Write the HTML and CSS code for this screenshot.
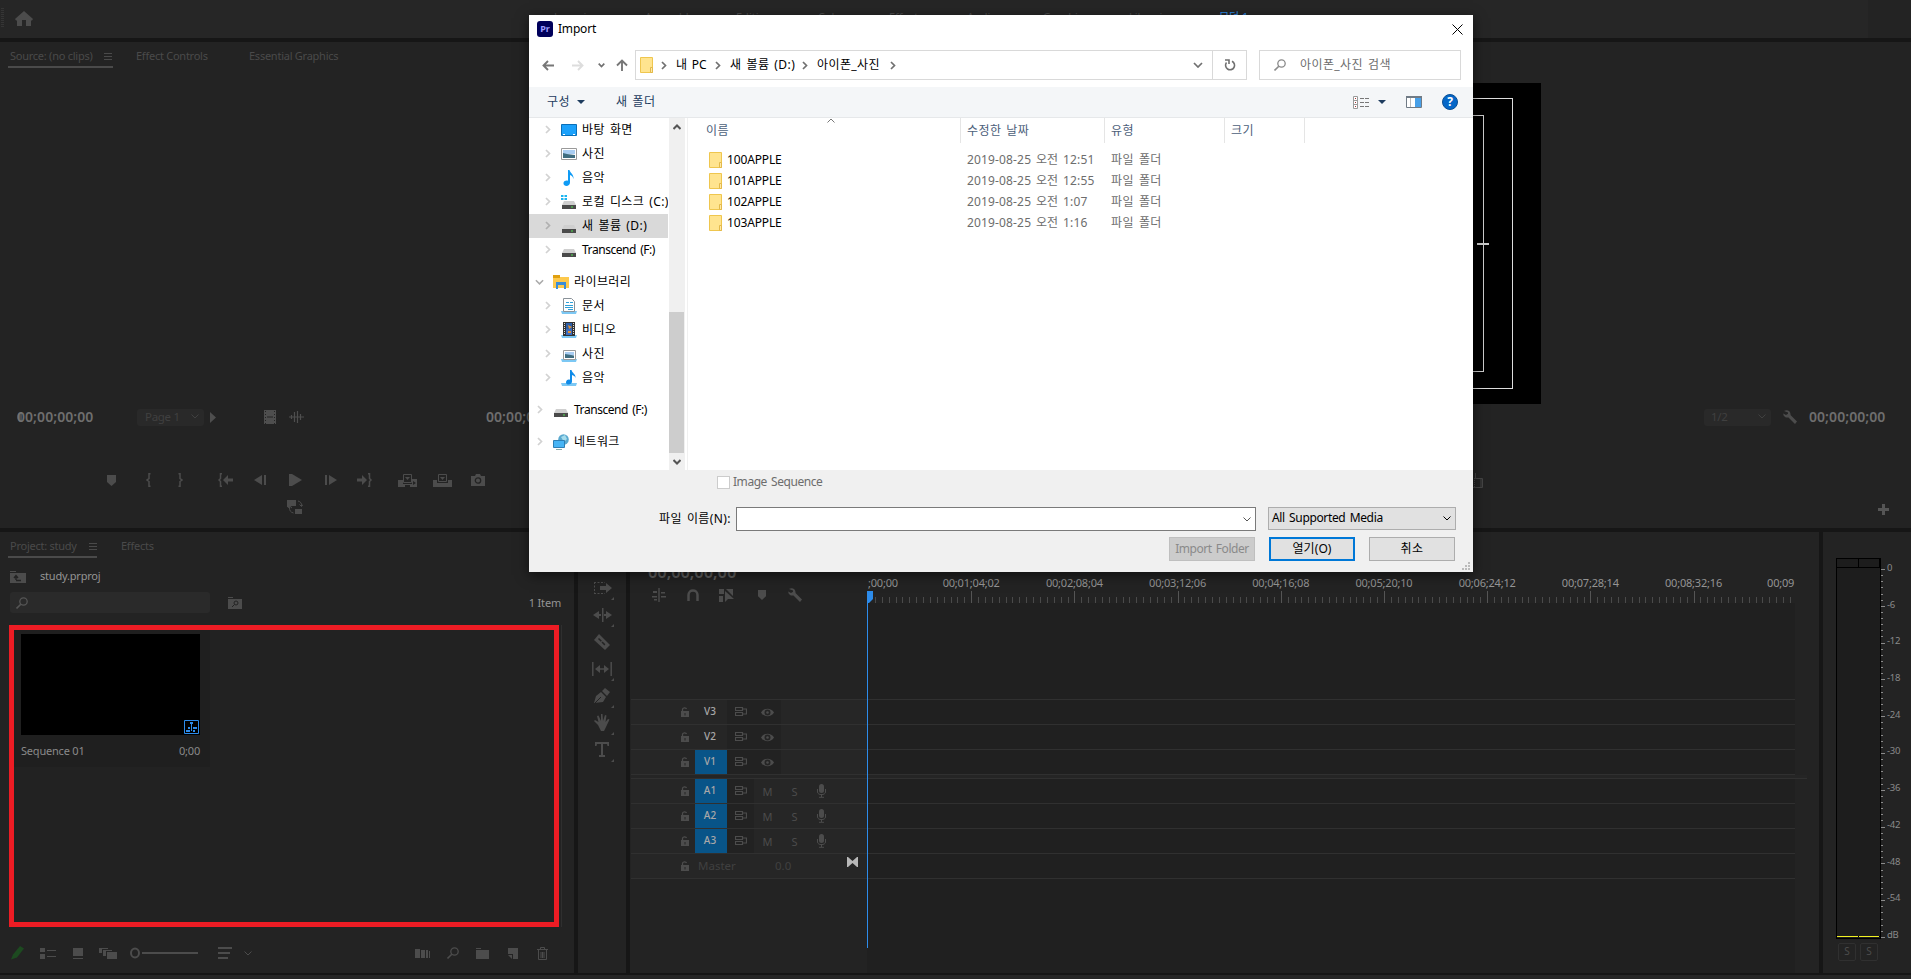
FILE: index.html
```html
<!DOCTYPE html>
<html lang="ko">
<head>
    <meta charset="UTF-8">
    <title>study.prproj</title>
    <link rel="stylesheet" href="styles.css">
</head>
<body>
    <!-- shared icons -->
    <svg class="defs">
        <symbol id="folder" viewBox="0 0 13 16"><path d="M.5.5h12v15H.5z" fill="#ffe48f" stroke="#efc64e"/><path d="M10.5 10.5h2v5h-2z" fill="#ffe9a6" stroke="#e3b94a"/></symbol>
        <symbol id="arrow" viewBox="0 0 6 9"><path d="M1 1l3.5 3.5L1 8" fill="none" stroke="currentColor" stroke-width="1.7"/></symbol>
        <symbol id="down" viewBox="0 0 10 6"><path d="M1 1l4 4 4-4" fill="none" stroke="currentColor" stroke-width="1.7"/></symbol>
        <symbol id="thin-down" viewBox="0 0 8 5"><path d="M.5.5L4 4 7.500.5" fill="none" stroke="currentColor"/></symbol>
        <symbol id="drive" viewBox="0 0 16 16"><path d="M3 7h10l2 4H1z" fill="#cfcfcf"/><path d="M1 11h14v4H1z" fill="#4a4a4a"/><path d="M10 12.500h2v1h-2z" fill="#4ee04e"/></symbol>
        <symbol id="picture" viewBox="0 0 16 16"><path d="M.5 2.500h15v11H.5z" fill="#fff" stroke="#9a9a9a"/><path d="M2 4h12v4H2z" fill="#a9cdf2"/><path d="M2 7l4 1 8 1v3H2z" fill="#3f6d80"/></symbol>
        <symbol id="lib-picture" viewBox="0 0 16 16"><path d="M0 13h16l-1 3H1z" fill="#7cc8f4"/><path d="M2.500 4.500h12v9h-12z" fill="#fff" stroke="#9a9a9a"/><path d="M4 6h9v3H4z" fill="#a9cdf2"/><path d="M4 8l9 1.500V12H4z" fill="#3f6d80"/></symbol>
        <symbol id="note" viewBox="0 0 16 16"><path d="M7 0h1.500c.5 3 4.500 4 4 9-.5-2.500-2-3.500-3.500-4v7.500C9 17 2 17 2.500 12.800 3 10.500 5.500 10 7 10.700z" fill="#0f9bf5"/></symbol>
        <symbol id="lib-note" viewBox="0 0 16 16"><path d="M0 13h16l-1 3H1z" fill="#7cc8f4"/><path d="M9 0h1.500c.5 3 4.500 4 4 8-.5-2-2-2.500-3.500-3v6.500c0 4-6.500 4-6 .5C5.500 9.500 7.500 9 9 9.700z" fill="#0f8be8"/></symbol>
        <symbol id="menu" viewBox="0 0 8 7"><path d="M0 .5h8M0 3.500h8M0 6.500h8" stroke="currentColor"/></symbol>
        <symbol id="marker" viewBox="0 0 9 11"><path d="M0 0h9v7l-4.500 4L0 7z" fill="currentColor"/></symbol>
        <symbol id="wrench" viewBox="0 0 14 14"><path d="M1 1c3-2 7 0 6.500 4L14 11.500 12 14 5.500 7.500C2.500 8 0 6 .3 3.500L3 5l2-1.200V2.500z" fill="currentColor"/></symbol>
        <symbol id="search" viewBox="0 0 12 12"><circle cx="7.500" cy="4.500" r="3.700" fill="none" stroke="currentColor" stroke-width="1.300"/><path d="M4.800 7.200L.5 11.500" stroke="currentColor" stroke-width="1.600"/></symbol>
        <symbol id="lock" viewBox="0 0 8 10"><path d="M0 4h8v6H0z" fill="currentColor"/><path d="M1.500 4V2.500C1.500.5 5 .3 5.500 2" fill="none" stroke="currentColor" stroke-width="1.300"/><path d="M3.500 6h1v2.500h-1z" fill="#252525"/></symbol>
        <symbol id="sync" viewBox="0 0 12 10"><path d="M.5.5h7v3h-7zM.5 5.500h7v3h-7zM8 2h3.500v5H8" fill="none" stroke="currentColor" stroke-width="1.200"/></symbol>
        <symbol id="eye" viewBox="0 0 13 9"><path d="M0 4.500C3-.5 10-.5 13 4.500 10 9.500 3 9.500 0 4.500z" fill="currentColor"/><circle cx="6.500" cy="4.500" r="3" fill="#242424"/><circle cx="6.500" cy="4.500" r="1.300" fill="currentColor"/></symbol>
        <symbol id="mic" viewBox="0 0 9 14"><rect x="2" width="5" height="9" rx="2.500" fill="currentColor"/><path d="M.5 5v3c0 3.500 8 3.500 8 0V5M4.500 10v3M2 13.300h5" fill="none" stroke="currentColor"/></symbol>
    </svg>

    <header class="topbar">
        <span class="grip"></span>
        <svg class="home" width="18" height="15"><path d="M9 0l9 8-1 1.500h-1V15h-5V9H7v6H2V9.500H1L0 8z" fill="#4c4c4c"/></svg>
        <nav class="workspaces">
            <span>Learning</span><span>Assembly</span><span>Editing</span><span>Color</span><span>Effects</span><span>Audio</span><span>Graphics</span><span>Libraries</span><span class="active">모던 1</span><span>»</span>
        </nav>
    </header>

    <main class="upper">
        <!-- source monitor -->
        <section class="panel source">
            <div class="tabs">
                <div class="tab current">Source: (no clips)<svg width="8" height="7"><use href="#menu"/></svg></div>
                <div class="tab t-controls">Effect Controls</div>
                <div class="tab t-graphics">Essential Graphics</div>
            </div>
            <div class="view"></div>
            <div class="time-row">
                <span class="timecode">00;00;00;00<i class="playpos"></i></span>
                <span class="pill">Page 1<svg width="8" height="5"><use href="#thin-down"/></svg></span>
                <svg width="6" height="11"><path d="M0 0l6 5.500L0 11z" fill="#4e4e4e"/></svg>
                <svg class="film" width="12" height="14"><path d="M0 0h12v14H0z" fill="#4e4e4e"/><path d="M3 7h6" stroke="#232323"/><path d="M1.500 1v13M10.500 1v13" stroke="#232323" stroke-dasharray="1 2"/></svg>
                <svg class="wave" width="15" height="12"><path d="M0 6h15" stroke="#4e4e4e"/><path d="M2.500 4v4M5.500 1v10M8.500 0v12M11.500 3v6" stroke="#4e4e4e" stroke-width="1.200"/></svg>
                <span class="timecode duration">00;00;00;00</span>
            </div>
            <div class="transport">
                <svg width="9" height="11"><use href="#marker"/></svg>
                <svg width="5" height="14"><path d="M4.500.7H3V5.500L1 7l2 1.500v4.800h1.500" fill="none" stroke="currentColor" stroke-width="1.500"/></svg>
                <svg width="5" height="14"><path d="M.5.7H2V5.500L4 7 2 8.500v4.800H.5" fill="none" stroke="currentColor" stroke-width="1.500"/></svg>
                <svg width="16" height="14"><path d="M4 .7H2.500V5.500L1 7l1.500 1.500v4.800H4" fill="none" stroke="currentColor" stroke-width="1.500"/><path d="M5 7l5-5v3.500h5v3h-5V12z" fill="currentColor"/></svg>
                <svg width="12" height="10"><path d="M8 0v10L0 5zM10 0h2v10h-2z" fill="currentColor"/></svg>
                <svg width="13" height="12"><path d="M0 0h3l10 6-10 6H0z" fill="currentColor"/></svg>
                <svg width="12" height="10"><path d="M4 0v10l8-5zM0 0h2v10H0z" fill="currentColor"/></svg>
                <svg width="16" height="14"><path d="M11 .7h1.500V5.500L14 7l-1.500 1.500v4.800H11" fill="none" stroke="currentColor" stroke-width="1.500"/><path d="M10 7L5 2v3.500H0v3h5V12z" fill="currentColor"/></svg>
                <svg width="19" height="13"><path d="M0 6h5v4h9V5h5v8h-7v-2H7v2H0z" fill="currentColor"/><path d="M5.500.5h8v8h-8z" fill="#232323" stroke="currentColor"/><path d="M7 3h5L9.500 6z" fill="currentColor"/><path d="M15 7l3 2-3 2z" fill="#232323"/></svg>
                <svg width="19" height="13"><path d="M0 6h4v3h11V6h4v7H0z" fill="currentColor"/><path d="M5.500.5h8v7h-8z" fill="#232323" stroke="currentColor"/><path d="M7 3h5L9.500 6z" fill="currentColor"/></svg>
                <svg width="14" height="12"><path d="M0 2h4l1-2h4l1 2h4v10H0z" fill="currentColor"/><circle cx="7" cy="6.500" r="2.700" fill="none" stroke="#232323" stroke-width="1.300"/></svg>
            </div>
            <svg class="swap" width="16" height="14"><path d="M0 0h9v6H5L2 7H0zM8 9h7v5H8z" fill="currentColor"/><path d="M11 1q4 1 3.500 5M12.500 4.500l2 2 1.500-2M2.500 7q-.5 5 4 6M1 8l1.500-2L5 8" fill="none" stroke="currentColor"/></svg>
        </section>

        <!-- program monitor -->
        <section class="panel program">
            <div class="screen">
                <div class="safe-action"><div class="safe-title"><i class="safe-tick"></i></div></div>
            </div>
            <div class="time-row program-row">
                <span class="pill">1/2<svg width="8" height="5"><use href="#thin-down"/></svg></span>
                <svg class="program-wrench" width="14" height="14"><use href="#wrench"/></svg>
                <span class="timecode">00;00;00;00</span>
            </div>
            <svg class="compare" width="20" height="15"><path d="M11.500 0v6M10 5.500h8.500v9H9M17 6v8" fill="none" stroke="#454545"/><path d="M10.500 5v10" stroke="#454545" stroke-dasharray="1 1"/></svg>
            <svg class="plus" width="11" height="11"><path d="M4 0h3v4h4v3H7v4H4V7H0V4h4z" fill="#555"/></svg>
        </section>
    </main>

    <main class="lower">
        <!-- project bin -->
        <section class="panel project">
            <div class="tabs">
                <div class="tab current">Project: study<svg width="8" height="7"><use href="#menu"/></svg></div>
                <div class="tab t-effects">Effects</div>
            </div>
            <div class="crumb">
                <svg width="16" height="12"><path d="M0 0h6v1H0zM0 2h16v10H0z" fill="#4c4c4c"/><path d="M6 9V5M4 7l2-2.500L8 7M6 9.500h5" fill="none" stroke="#232323" stroke-width="1.400"/></svg>
                <span>study.prproj</span>
            </div>
            <div class="find-row">
                <div class="find"><svg width="12" height="12"><use href="#search"/></svg></div>
                <svg width="14" height="12"><path d="M0 0h5v1H0zM0 2h14v10H0z" fill="#4c4c4c"/><circle cx="8" cy="6" r="2" fill="none" stroke="#232323"/><path d="M6.500 7.500L4 10" stroke="#232323"/></svg>
                <span class="count">1 Item</span>
            </div>
            <div class="bin">
                <div class="clip">
                    <div class="thumb"><svg width="15" height="14"><path d="M.5.5h14v13H.5z" fill="#000" stroke="#2d8ceb"/><path d="M6 2h3v2H8v7H7V4H6zM4 7h2v2H4zM9 7h4v2H9zM2 10h4v2H2zM9 10h2v2H9z" fill="#2d8ceb"/></svg></div>
                    <div class="clip-info"><span>Sequence 01</span><span>0;00</span></div>
                </div>
            </div>
            <div class="bin-tools">
                <svg width="14" height="14"><path d="M0 13.500L2 8.500 9 0l4 2.500L6 11.500z" fill="#1d4a20"/></svg>
                <svg width="16" height="11"><path d="M0 0h5v4H0zM0 6h5v5H0zM7 2h9v1H7zM7 8h9v1H7z" fill="currentColor"/></svg>
                <svg width="10" height="11"><path d="M0 0h10v8H0zM0 10h10v1H0z" fill="currentColor"/></svg>
                <svg width="18" height="11"><path d="M0 0h9v1H3v4H0zM4 2h9v1H7v5H4zM8 4h10v7H8z" fill="currentColor"/></svg>
                <svg width="68" height="12"><ellipse cx="5" cy="6" rx="4" ry="4.500" fill="none" stroke="currentColor" stroke-width="2"/><path d="M12 6h56" stroke="currentColor" stroke-width="2"/></svg>
                <svg width="14" height="13"><path d="M0 0h14v2H0zM0 5h12v2H0zM0 10h10v2H0z" fill="currentColor"/></svg>
                <svg width="8" height="5"><use href="#thin-down"/></svg>
                <svg width="15" height="9"><path d="M0 0h5v9H0zM6 1h4v8H6zM11 1h2v8h-2zM14 2h1v7h-1z" fill="currentColor"/></svg>
                <svg width="12" height="12"><use href="#search"/></svg>
                <svg width="13" height="11"><path d="M0 0h5v1H0zM0 2h13v9H0z" fill="currentColor"/></svg>
                <svg width="10" height="11"><path d="M0 0h10v11H5V6H0z" fill="currentColor"/><path d="M0 7h4v4z" fill="currentColor"/></svg>
                <svg width="11" height="13"><path d="M0 2.500h11M3.500 2V.5h4V2M1.500 3v9.500h8V3M4 5v6M5.500 5v6M7 5v6" fill="none" stroke="currentColor"/></svg>
            </div>
        </section>

        <!-- tool strip -->
        <section class="panel tools">
            <div class="tool"><svg width="19" height="14"><path d="M1 1.500h11M1 12.500h11M1.500 1v12" stroke="currentColor" stroke-dasharray="2 1.500"/><path d="M7 5h6V2l6 5-6 5V9H7z" fill="currentColor"/></svg></div>
            <div class="tool"><svg width="19" height="14"><path d="M9 0h1.500v14H9zM0 7l6-4v3h2v2H6v3zM19 7l-6-4v3h-2v2h2v3z" fill="currentColor"/></svg></div>
            <div class="tool plain"><svg width="16" height="16"><path d="M5 0l11 11-5 5L0 6z" fill="currentColor"/><path d="M4.500 4.500l7 7" stroke="#232323" stroke-width="1.500" stroke-dasharray="4 1"/></svg></div>
            <div class="tool"><svg width="20" height="14"><path d="M.8 0v14M19.200 0v14M4 7h12" stroke="currentColor" stroke-width="1.500"/><path d="M3 7l5-4v8zM17 7l-5-4v8z" fill="currentColor"/></svg></div>
            <div class="tool"><svg width="16" height="16"><path d="M0 15L2 8l5-4 5 5-3 5zM8 3l3-3 5 4-3 4z" fill="currentColor"/><path d="M1 15l6-6" stroke="#232323"/></svg></div>
            <div class="tool"><svg width="16" height="17"><path d="M4 11L0 7l1-1 3.500 2L3 2l1.500-.5L7 7V0h1.500l.5 7 2-6 1.500.5L11.500 8 14 5l1.500.5L12 13l-2 4H7z" fill="currentColor"/></svg></div>
            <div class="tool"><svg width="14" height="15"><path d="M0 0h14v4h-1.500L12 2H8v11h2v2H4v-2h2V2H2l-.5 2H0z" fill="currentColor"/></svg></div>
        </section>

        <!-- timeline -->
        <section class="panel timeline">
            <div class="timeline-top">
                <div class="timeline-left">
                    <span class="timecode big">00;00;00;00</span>
                    <div class="timeline-icons">
                        <svg width="14" height="14"><path d="M1 3h4v2H1zM0 8h5v1.500H0zM9 4h4v1.500H9zM9 8h5v1.500H9zM2 11h3v1.500H2zM6.300 0h1.400v14H6.300z" fill="currentColor"/></svg>
                        <svg width="12" height="12"><path d="M1.500 12V6c0-6 9-6 9 0v6" fill="none" stroke="currentColor" stroke-width="2.500"/></svg>
                        <svg width="15" height="13"><path d="M0 0h5v5H0zM0 7h4v6H0zM7 0h7v7z" fill="currentColor"/><path d="M6 2l9 8H9l-3 3z" fill="currentColor"/></svg>
                        <svg width="8" height="10"><use href="#marker"/></svg>
                        <svg width="14" height="14"><use href="#wrench"/></svg>
                    </div>
                </div>
                <div class="ruler">
                    <div class="stamps"><span class="first">;00;00</span><span>00;01;04;02</span><span>00;02;08;04</span><span>00;03;12;06</span><span>00;04;16;08</span><span>00;05;20;10</span><span>00;06;24;12</span><span>00;07;28;14</span><span>00;08;32;16</span><span class="last">00;09</span></div>
                    <div class="ticks"></div>
                </div>
            </div>
            <div class="tracks">
                <div class="track video"><div class="head"><svg width="8" height="10"><use href="#lock"/></svg><b>V3</b><span class="cell"><svg width="12" height="10"><use href="#sync"/></svg></span><span class="cell"><svg width="13" height="9"><use href="#eye"/></svg></span></div></div>
                <div class="track video"><div class="head"><svg width="8" height="10"><use href="#lock"/></svg><b>V2</b><span class="cell"><svg width="12" height="10"><use href="#sync"/></svg></span><span class="cell"><svg width="13" height="9"><use href="#eye"/></svg></span></div></div>
                <div class="track video"><div class="head"><svg width="8" height="10"><use href="#lock"/></svg><b class="on">V1</b><span class="cell"><svg width="12" height="10"><use href="#sync"/></svg></span><span class="cell"><svg width="13" height="9"><use href="#eye"/></svg></span></div></div>
                <div class="split"></div>
                <div class="track audio"><div class="head"><svg width="8" height="10"><use href="#lock"/></svg><b class="on">A1</b><span class="cell"><svg width="12" height="10"><use href="#sync"/></svg></span><span>M</span><span>S</span><span><svg width="9" height="14"><use href="#mic"/></svg></span></div></div>
                <div class="track audio"><div class="head"><svg width="8" height="10"><use href="#lock"/></svg><b class="on">A2</b><span class="cell"><svg width="12" height="10"><use href="#sync"/></svg></span><span>M</span><span>S</span><span><svg width="9" height="14"><use href="#mic"/></svg></span></div></div>
                <div class="track audio"><div class="head"><svg width="8" height="10"><use href="#lock"/></svg><b class="on">A3</b><span class="cell"><svg width="12" height="10"><use href="#sync"/></svg></span><span>M</span><span>S</span><span><svg width="9" height="14"><use href="#mic"/></svg></span></div></div>
                <div class="track master"><div class="head"><svg width="8" height="10"><use href="#lock"/></svg><em>Master</em><em class="gain">0.0</em><svg class="ends" width="11" height="10"><path d="M0 0h1l4.500 4L10 0h1v10h-1L5.500 6 1 10H0z" fill="#b8b8b8"/></svg></div></div>
            </div>
            <div class="playhead"><svg width="7" height="12"><path d="M0 0h6v8l-4 4H0z" fill="#2d8ceb"/></svg></div>
        </section>

        <!-- audio meters -->
        <section class="panel meters">
            <div class="meter-wrap">
                <div class="meter"><i></i><i></i><i class="level"></i><i class="level"></i></div>
                <div class="scale"></div>
                <div class="db"><span>0</span><span>-6</span><span>-12</span><span>-18</span><span>-24</span><span>-30</span><span>-36</span><span>-42</span><span>-48</span><span>-54</span><span>dB</span></div>
            </div>
            <div class="solo"><span>S</span><span>S</span></div>
        </section>
    </main>
    <footer class="status"></footer>

    <!-- import dialog -->
    <div class="dialog">
        <div class="title">
            <span class="pr">Pr</span><span class="latin">Import</span>
            <svg class="close" width="11" height="11"><path d="M.5.5l10 10M10.500.5l-10 10" stroke="#000"/></svg>
        </div>
        <div class="address">
            <svg class="nav-back" width="12" height="11"><path d="M12 5.500H1.500M6 1L1.500 5.500 6 10" fill="none" stroke="#777" stroke-width="1.900"/></svg>
            <svg class="nav-fwd" width="12" height="11"><path d="M0 5.500h10.500M6 1l4.500 4.500L6 10" fill="none" stroke="#ddd" stroke-width="1.900"/></svg>
            <svg class="nav-recent" width="7" height="5"><path d="M.7.7l2.800 2.800L6.300.7" fill="none" stroke="currentColor" stroke-width="1.700"/></svg>
            <svg class="nav-up" width="12" height="12"><path d="M6 12V1.500M1 6.500l5-5 5 5" fill="none" stroke="#777" stroke-width="1.900"/></svg>
            <div class="path">
                <svg width="13" height="16"><use href="#folder"/></svg>
                <svg class="sep" width="6" height="9"><use href="#arrow"/></svg><span class="p-pc">내 PC</span>
                <svg class="sep" width="6" height="9"><use href="#arrow"/></svg><span class="p-vol">새 볼륨 (D:)</span>
                <svg class="sep" width="6" height="9"><use href="#arrow"/></svg><span class="p-dir">아이폰_사진</span>
                <svg class="sep" width="6" height="9"><use href="#arrow"/></svg>
                <svg class="drop" width="10" height="6"><use href="#down"/></svg>
                <span class="refresh"><svg width="12" height="12"><path d="M8 2.200a4.500 4.500 0 1 1-5.500 1.300M1 1h4v4" fill="none" stroke="#707070" stroke-width="1.600"/></svg></span>
            </div>
            <div class="search"><svg width="12" height="12"><use href="#search"/></svg>아이폰_사진 검색</div>
        </div>
        <div class="commands">
            <span class="organize">구성</span><i class="caret"></i><span class="new-folder">새 폴더</span>
            <svg class="view-mode" width="16" height="13"><path d="M.5.5h4v12h-4zM.5 4.500h4M.5 8.500h4" fill="#fff" stroke="#9a9a9a"/><path d="M7 2.500h4M12 2.500h4M7 6.500h4M12 6.500h4M7 10.500h4M12 10.500h4" stroke="#777"/><path d="M2 2h1v1H2zM2 6h1v1H2zM2 10h1v1H2z" fill="#a33"/></svg>
            <i class="caret second"></i>
            <svg class="pane" width="16" height="12"><path d="M.5.5h15v11H.5z" fill="#fff" stroke="#707b86"/><path d="M0 0h16v2H0z" fill="#707b86"/><path d="M9 2h6v9H9z" fill="#48a0e8"/><path d="M4.500 2v9" stroke="#bbb"/></svg>
            <span class="help">?</span>
        </div>
        <div class="browser">
            <div class="tree">
                <div class="node"><svg class="ar" width="6" height="9"><use href="#arrow"/></svg><svg width="16" height="16"><path d="M.5 2.500h15v11H.5z" fill="#1ba1fb" stroke="#0a6fb8"/><path d="M2 12.500h2M12 12.500h2" stroke="#fff"/></svg>바탕 화면</div>
                <div class="node"><svg class="ar" width="6" height="9"><use href="#arrow"/></svg><svg width="16" height="16"><use href="#picture"/></svg>사진</div>
                <div class="node"><svg class="ar" width="6" height="9"><use href="#arrow"/></svg><svg width="16" height="16"><use href="#note"/></svg>음악</div>
                <div class="node"><svg class="ar" width="6" height="9"><use href="#arrow"/></svg><svg width="16" height="16"><use href="#drive"/><path d="M0 1h2.500v2H0zM3.500 1H6v2H3.500zM0 4h2.500v2H0zM3.500 4H6v2H3.500z" fill="#1bb4f0"/></svg>로컬 디스크 (C:)</div>
                <div class="node selected"><svg class="ar" width="6" height="9"><use href="#arrow"/></svg><svg width="16" height="16"><use href="#drive"/></svg>새 볼륨 (D:)</div>
                <div class="node latin"><svg class="ar" width="6" height="9"><use href="#arrow"/></svg><svg width="16" height="16"><use href="#drive"/></svg>Transcend (F:)</div>
                <div class="node root"><svg class="open" width="9" height="6"><use href="#down"/></svg><svg width="16" height="16"><path d="M0 1h6l1 2h9v11H0z" fill="#fdc94d"/><path d="M0 1h7v3H0z" fill="#e0a010"/><path d="M3 8h10v7h-2v-4H5v4H3z" fill="#3a8dd8"/></svg>라이브러리</div>
                <div class="node"><svg class="ar" width="6" height="9"><use href="#arrow"/></svg><svg width="16" height="16"><path d="M0 13h16l-1 3H1z" fill="#7cc8f4"/><path d="M2.500.5h8l3 3v10h-11z" fill="#fff" stroke="#8a9299"/><path d="M5 4.500h3M9 4.500h3M4 7.500h8M4 9.500h8M7 11.500h5" stroke="#2f9fd8"/></svg>문서</div>
                <div class="node"><svg class="ar" width="6" height="9"><use href="#arrow"/></svg><svg width="16" height="16"><path d="M0 13h16l-1 3H1z" fill="#7cc8f4"/><path d="M2 0h12v14H2z" fill="#333"/><path d="M5 1h6v6H5z" fill="#2c5fa8"/><path d="M5 7h6v6H5z" fill="#3b6cc0"/><path d="M7 3l4 2-3 2zM7 9h3v2H7z" fill="#e29132"/><path d="M3.500 1v12M12.500 1v12" stroke="#ddd" stroke-dasharray="1 1"/></svg>비디오</div>
                <div class="node"><svg class="ar" width="6" height="9"><use href="#arrow"/></svg><svg width="16" height="16"><use href="#lib-picture"/></svg>사진</div>
                <div class="node"><svg class="ar" width="6" height="9"><use href="#arrow"/></svg><svg width="16" height="16"><use href="#lib-note"/></svg>음악</div>
                <div class="node root latin"><svg class="ar" width="6" height="9"><use href="#arrow"/></svg><svg width="16" height="16"><use href="#drive"/></svg>Transcend (F:)</div>
                <div class="node root"><svg class="ar" width="6" height="9"><use href="#arrow"/></svg><svg width="16" height="16"><circle cx="10.500" cy="5.500" r="5.300" fill="#5aa9cf"/><path d="M8 3l4-2 2 4-3 3z" fill="#a5dcec"/><path d="M.5 6.500h11v7H.5z" fill="#47b4f5" stroke="#2d7fb5"/><path d="M3 15.500h6" stroke="#8aa"/></svg>네트워크</div>
            </div>
            <div class="scrollbar">
                <svg width="8" height="6"><path d="M.5 5L4 1.500 7.500 5" fill="none" stroke="#555" stroke-width="2"/></svg>
                <i class="scroll-thumb"></i>
                <svg width="8" height="6"><path d="M.5 1L4 4.500 7.500 1" fill="none" stroke="#555" stroke-width="2"/></svg>
            </div>
            <div class="files">
                <div class="row columns"><span>이름<svg class="sort" width="8" height="5"><path d="M.5 4.500L4 1l3.500 3.500" fill="none" stroke="#777"/></svg></span><span>수정한 날짜</span><span>유형</span><span>크기</span></div>
                <div class="row"><span class="name"><svg width="13" height="16"><use href="#folder"/></svg>100APPLE</span><span class="date">2019-08-25 오전 12:51</span><span>파일 폴더</span></div>
                <div class="row"><span class="name"><svg width="13" height="16"><use href="#folder"/></svg>101APPLE</span><span class="date">2019-08-25 오전 12:55</span><span>파일 폴더</span></div>
                <div class="row"><span class="name"><svg width="13" height="16"><use href="#folder"/></svg>102APPLE</span><span class="date">2019-08-25 오전 1:07</span><span>파일 폴더</span></div>
                <div class="row"><span class="name"><svg width="13" height="16"><use href="#folder"/></svg>103APPLE</span><span class="date">2019-08-25 오전 1:16</span><span>파일 폴더</span></div>
            </div>
        </div>
        <div class="bottom">
            <div class="option latin"><i class="check"></i>Image Sequence</div>
            <div class="name-row">
                <span class="label">파일 이름(N):</span>
                <div class="field"><svg width="8" height="5"><use href="#thin-down"/></svg></div>
                <div class="select latin">All Supported Media<svg width="8" height="5"><use href="#thin-down"/></svg></div>
            </div>
            <div class="actions"><span class="btn disabled latin">Import Folder</span><span class="btn default">열기(O)</span><span class="btn">취소</span></div>
            <svg class="resize" width="9" height="9"><path d="M6 0h2v2H6zM3 3h2v2H3zM6 3h2v2H6zM0 6h2v2H0zM3 6h2v2H3zM6 6h2v2H6z" fill="#bbb"/></svg>
        </div>
    </div>
</body>
</html>
```
FILE: styles.css
```css
* { box-sizing: border-box; }
body {
    margin: 0;
    width: 1911px;
    height: 979px;
    overflow: hidden;
    display: flex;
    flex-direction: column;
    background: #161616;
    color: #4c4c4c;
    font-family: "Noto Sans", "Noto Sans CJK KR", sans-serif;
    font-size: 11px;
    position: relative;
}
svg { display: block; flex: none; }
i, em { font-style: normal; }
.defs { position: absolute; width: 0; height: 0; }
.panel { background: #232323; }

/* top bar */
.topbar {
    height: 38px;
    margin-bottom: 4px;
    display: flex;
    background: #262626;
    border-right: 43px solid #232323;
}
.grip {
    width: 3px;
    height: 19px;
    margin: 8px 11px 0 1px;
    background: repeating-linear-gradient(#353535 0 1px, #262626 1px 2px);
}
.home { margin-top: 11px; }
.workspaces {
    display: grid;
    grid-template-columns: 91px 91px 82px 71px 78px 76px 86px 90px 144px 20px;
    height: 16px;
    line-height: 16px;
    margin: 9px 0 0 521px;
}
.workspaces .active { color: #2d8ceb; }

/* panel tabs */
.tabs { display: flex; height: 26px; padding-left: 8px; }
.tab { height: 26px; padding: 6px 0 0 2px; line-height: 16px; color: #4a4a4a; white-space: nowrap; letter-spacing: -.25px; }
.tab.current {
    display: flex;
    justify-content: space-between;
    width: 105px;
    padding-right: 1px;
    border-bottom: 2px solid #4a4a4a;
}
.tab svg { margin-top: 5px; }
.t-controls { width: 113px; margin-left: 21px; }

/* monitors */
.upper { display: flex; gap: 4px; height: 486px; margin-bottom: 4px; }
.source { width: 955px; }
.view { height: 337px; }
.time-row { display: flex; align-items: center; height: 24px; padding-left: 17px; }
.timecode { position: relative; width: 77px; padding-bottom: 2px; color: #6e6e6e; font-size: 14px; font-weight: 600; letter-spacing: .05px; white-space: nowrap; }
.playpos { position: absolute; left: 0; top: 5px; width: 5px; height: 10px; border-radius: 5px 0 0 5px; background: #77777780; }
.pill {
    display: flex;
    align-items: center;
    justify-content: space-between;
    width: 67px;
    height: 17px;
    margin: 0 6px 0 43px;
    padding: 0 5px 1px 8px;
    border-radius: 3px;
    background: #292929;
    font-size: 11.500px;
    letter-spacing: -.3px;
    color: #404040;
}
.film { margin-left: 48px; }
.wave { margin-left: 13px; }
.duration { margin-left: 182px; }
.transport {
    display: grid;
    grid-template-columns: 39px 32px 40px 36px 35px 36px 32px 41px 35px 38px 14px;
    align-items: center;
    height: 20px;
    margin-top: 41px;
    padding-left: 107px;
}
.swap { margin: 10px 0 0 287px; }

.program { flex: 1; padding-top: 41px; }
.screen { width: 571px; height: 321px; margin-left: 11px; padding: 15px 28px; background: #000; }
.safe-action { height: 291px; padding: 16px 28px; border: 1px solid #ddd; }
.safe-title { position: relative; height: 257px; border: 1px solid #ccc; }
.safe-tick { position: absolute; right: -6px; top: 127px; width: 12px; height: 2px; background: #ccc; }
.program-row { margin-top: 1px; padding-left: 745px; }
.program-row .pill { margin: 0 12px 0 0; padding-left: 7px; }
.program-wrench { margin-right: 12px; }
.compare { margin: 44px 0 0 505px; }
.plus { margin: 16px 0 0 919px; }

.lower { display: flex; gap: 4px; height: 441px; }

/* project */
.project { width: 574px; color: #8a8a8a; }
.project .tab.current { width: 89px; padding-right: 0; }
.t-effects { margin-left: 22px; }
.crumb { display: flex; align-items: center; gap: 14px; height: 20px; margin-top: 9px; padding-left: 10px; color: #949494; letter-spacing: -.2px; }
.crumb span { padding-bottom: 3px; }
.find-row { display: flex; align-items: center; height: 21px; margin-top: 5px; padding: 0 13px 0 10px; letter-spacing: -.2px; }
.find { display: flex; align-items: center; width: 200px; height: 21px; margin-right: 18px; padding-left: 6px; border-radius: 3px; background: #2a2a2a; color: #555; }
.count { margin-left: auto; color: #949494; }
.bin { width: 550px; height: 302px; margin: 12px 0 0 9px; border: 5px solid #ed1c24; background: #222; box-shadow: 2px 0 0 #232323, 3px 0 0 #2f2f2f; }
.clip { width: 196px; height: 137px; padding: 4px 10px 0 7px; background: #1f1f1f; }
.thumb { display: flex; align-items: flex-end; justify-content: flex-end; width: 179px; height: 101px; padding: 0 1px 1px 0; background: #000; }
.clip-info { display: flex; justify-content: space-between; padding-top: 8px; color: #8a8a8a; letter-spacing: -.2px; }
.bin-tools {
    display: grid;
    grid-template-columns: 29px 33px 26px 31px 88px 26px 171px 32px 29px 32px 29px 11px;
    align-items: center;
    height: 16px;
    margin-top: 18px;
    padding-left: 11px;
    color: #4c4c4c;
}

/* tools */
.tools { width: 48px; padding-top: 42px; }
.tool { display: flex; align-items: center; justify-content: center; position: relative; height: 27px; }
.tool::after { content: ""; position: absolute; left: 33px; bottom: 1px; border: solid transparent; border-width: 0 0 3px 3px; border-bottom-color: #4c4c4c; }
.plain::after { display: none; }

/* timeline */
.timeline { position: relative; width: 1189px; padding-left: 1px; background: linear-gradient(90deg, #232323 0 237px, #202020 237px 1165px, #232323 1165px); }
.timeline-top { display: flex; height: 71px; background: #232323; }
.timeline-left { width: 237px; }
.timecode.big { display: block; width: 100px; height: 22px; margin: 29px 0 0 17px; padding: 0; font-size: 16.500px; line-height: 22px; letter-spacing: -.1px; color: #606060; }
.timeline-icons { display: grid; grid-template-columns: 35px 32px 39px 30px 14px; align-items: center; height: 16px; margin: 4px 0 0 21px; }
.ruler { width: 927px; overflow: hidden; }
.stamps { display: flex; height: 16px; margin-top: 43px; color: #949494; letter-spacing: -.2px; line-height: 16px; }
.stamps span { flex: none; width: 103.2px; text-align: center; }
.stamps .first { width: 51.6px; text-align: left; }
.stamps .last { width: 46px; padding-left: 22px; text-align: left; overflow: visible; }
.ticks {
    height: 12px;
    background:
        repeating-linear-gradient(90deg, #555 0 1px, transparent 1px 103.2px),
        repeating-linear-gradient(90deg, #4a4a4a 0 1px, transparent 1px 6.88px) 0 6px / 100% 6px no-repeat;
}
.tracks { margin-top: 96px; }
.track { height: 25px; width: 1164px; border-top: 1px solid #303030; }
.video:nth-child(3) { height: 26px; border-bottom: 1px solid #303030; }
.split { height: 4px; width: 1176px; border-bottom: 1px solid #303030; background: #252525; }
.split + .track { height: 24px; border-top: 0; }
.head { display: flex; align-items: center; width: 237px; height: 24px; padding-left: 50px; background: #262626; border-right: 1px solid #303030; }
.head b { width: 32px; height: 24px; margin-left: 6px; padding-right: 2px; line-height: 23px; text-align: center; font-weight: 500; font-size: 10px; color: #a8a8a8; }
.head b.on { background: #085488; }
.head span { display: flex; align-items: center; justify-content: center; width: 27px; height: 24px; }
.head .cell { background: #222; }
.master { border-bottom: 1px solid #303030; height: 26px; }
.head em { width: 77px; margin-left: 9px; font-size: 11.500px; line-height: 22px; color: #404040; }
.head .gain { width: 72px; margin-left: 0; }
.ends { margin-bottom: 8px; }
.playhead { position: absolute; left: 237px; top: 59px; width: 7px; height: 357px; border-left: 1px solid #2d8ceb; }
.playhead svg { margin-left: -1px; }

/* meters */
.meters { flex: 1; padding: 26px 0 0 13px; }
.meter-wrap { display: flex; height: 381px; }
.meter { display: grid; grid-template: 9px 368px 2px / 22px 21px; width: 45px; border: 1px solid #000; background: #1d1d1d; }
.meter i { border: solid #000; border-width: 0 1px 1px 0; }
.meter .level { margin-top: 368px; border-bottom: 0; height: 1px; background: #f2f222; }
.scale {
    width: 6px;
    height: 369px;
    margin-top: 11px;
    background:
        repeating-linear-gradient(#8a8a8a 0 1px, transparent 1px 36.8px) 0 0 / 4px 100% no-repeat,
        repeating-linear-gradient(#8a8a8a 0 1px, transparent 1px 6.133px) 0 0 / 2px 100% no-repeat;
}
.db { font-size: 9.500px; color: #8a8a8a; letter-spacing: -.3px; margin-top: 2px; }
.db span { display: block; height: 36.7px; line-height: 16px; }
.solo { display: flex; gap: 4px; margin: 4px 0 0 2px; }
.solo span { width: 18px; height: 18px; border: 1px solid #303030; border-radius: 2px; line-height: 15px; text-align: center; font-size: 10px; }
.status { height: 4px; margin-top: 2px; background: #262626; }

/* import dialog */
.dialog {
    position: absolute;
    left: 529px;
    top: 15px;
    width: 944px;
    height: 557px;
    background: #fff;
    box-shadow: 0 3px 12px rgba(0,0,0,.55);
    font-size: 12px;
    color: #000;
    line-height: 16px;
    white-space: nowrap;
    letter-spacing: .4px;
    word-spacing: 1.500px;
}
.latin { letter-spacing: -.45px; }
.title { display: flex; height: 35px; padding: 6px 10px 0 8px; }
.title .latin { letter-spacing: -.2px; }
.pr { width: 16px; height: 16px; margin-right: 5px; border-radius: 3px; background: #00005b; color: #9c9cff; font-size: 9px; font-weight: 700; line-height: 15px; text-align: center; letter-spacing: 0; }
.close { margin: 3px 0 0 auto; }
.address { display: flex; align-items: center; height: 30px; padding-left: 13px; color: #707070; }
.nav-fwd { margin-left: 18px; }
.nav-recent { margin-left: 14px; }
.nav-up { margin-left: 11px; }
.path { display: flex; align-items: center; width: 612px; height: 30px; margin: 0 12px 0 7px; padding-left: 4px; border: 1px solid #d9d9d9; }
.path span:not(.refresh) { color: #000; }
.path .sep { margin: 0 9px 0 8px; }
.path span + .sep { margin-left: 0; }
.p-pc { width: 39px; letter-spacing: 0; }
.p-vol { width: 72px; }
.p-dir { width: 73px; }
.drop { margin-left: auto; }
.refresh { display: flex; align-items: center; justify-content: center; width: 34px; height: 30px; margin-left: 9px; border-left: 1px solid #d9d9d9; }
.search { display: flex; align-items: center; width: 202px; height: 30px; padding-left: 14px; border: 1px solid #d9d9d9; color: #6d6d6d; }
.search svg { margin-right: 14px; color: #8a8a8a; }
.commands { display: flex; align-items: center; height: 31px; margin-top: 7px; padding: 0 15px 0 18px; background: #f4f6f8; border-bottom: 1px solid #e6e8ea; color: #1e3c5f; }
.organize { width: 30px; }
.caret { border: solid transparent; border-width: 4px 4px 0; border-top-color: #1e3c5f; }
.new-folder { margin-left: 31px; }
.view-mode { margin-left: auto; }
.second { margin: 0 20px 0 9px; }
.help { width: 16px; height: 16px; margin-left: 20px; border: 1px solid #0a4f94; border-radius: 8px; background: #0567c8; color: #fff; font-weight: 700; line-height: 14px; text-align: center; letter-spacing: 0; }
.browser { display: flex; height: 352px; }
.tree { width: 139px; margin-right: 1px; overflow: hidden; }
.node { display: flex; align-items: center; height: 24px; padding: 0 0 1px 16px; }
.node svg + svg { margin: 1px 5px 0 10px; }
.node.root { margin-top: 8px; padding-left: 8px; }
.node .open { width: 9px; margin-left: -2px; color: #aaa; }
.node .open + svg { margin-left: 9px; }
.ar { color: #d2d2d2; }
.selected { background: #d9d9d9; }
.selected .ar { color: #b0b0b0; }
.scrollbar { display: flex; flex-direction: column; align-items: center; width: 16px; padding: 6px 1px 5px 0; background: #f0f0f0; }
.scroll-thumb { width: 15px; height: 141px; margin: 182px 0 6px; background: #cdcdcd; }
.files { flex: 1; margin-left: 2px; border-left: 1px solid #f0f0f0; }
.row { display: grid; grid-template-columns: 273px 144px 120px 80px; height: 21px; line-height: 21px; color: #6d6d6d; }
.row > span { padding-left: 6px; }
.row .name { display: flex; align-items: center; gap: 5px; padding-left: 21px; color: #000; letter-spacing: -.15px; }
.row .date { letter-spacing: .15px; }
.columns { height: 25px; margin-bottom: 6px; line-height: 25px; color: #4c607a; }
.columns span { border-right: 1px solid #e5e5e5; }
.columns span:first-child { position: relative; padding-left: 18px; }
.sort { position: absolute; left: 139px; top: 0; }
.bottom { position: relative; height: 102px; background: #f0f0f0; }
.option { display: flex; align-items: center; height: 24px; padding-left: 188px; color: #6d6d6d; }
.check { width: 13px; height: 13px; margin-right: 3px; border: 1px solid #ccc; background: #fff; }
.name-row { display: flex; height: 24px; margin-top: 13px; }
.label { width: 77px; margin-left: 130px; line-height: 23px; }
.field { display: flex; align-items: center; justify-content: flex-end; width: 520px; padding-right: 4px; border: 1px solid #7a7a7a; background: #fff; color: #555; }
.select { display: flex; align-items: center; justify-content: space-between; width: 188px; height: 23px; margin-left: 12px; padding: 0 4px 1px 3px; border: 1px solid #adadad; background: #e1e1e1; }
.select.latin { letter-spacing: -.35px; }
.actions { display: flex; margin: 6px 0 0 640px; }
.btn { width: 86px; height: 24px; margin-right: 14px; border: 1px solid #adadad; background: #e1e1e1; line-height: 21px; text-align: center; }
.btn.disabled { border-color: #bfbfbf; background: #ccc; color: #8a8a8a; }
.btn.default { border: 2px solid #0078d7; line-height: 19px; letter-spacing: .1px; }
.resize { position: absolute; right: 2px; bottom: 1px; }
```
